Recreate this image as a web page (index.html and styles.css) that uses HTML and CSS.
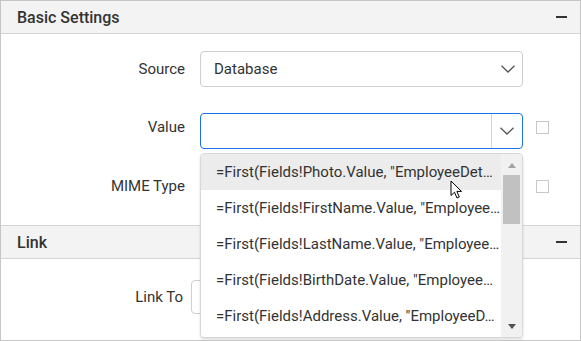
FILE: index.html
```html
<!DOCTYPE html>
<html>
<head>
<meta charset="utf-8">
<link rel="stylesheet" href="styles.css">
</head>
<body>
<div class="panel">
  <div class="sec-head">
    <span class="sec-title">Basic Settings</span>
    <span class="minus"></span>
  </div>
  <div class="sec-body basic">
    <div class="row row-source">
      <label class="lbl">Source</label>
      <div class="select">
        <span class="select-text">Database</span>
        <svg class="chev" width="14" height="8" viewBox="0 0 14 8"><path d="M0.5 0.7 L7 7 L13.5 0.7" fill="none" stroke="#555" stroke-width="1.3"/></svg>
      </div>
    </div>
    <div class="row row-value">
      <label class="lbl">Value</label>
      <div class="combo-wrap">
        <div class="combo">
          <span class="combo-input"></span>
          <span class="combo-btn">
            <svg class="chev" width="14" height="8" viewBox="0 0 14 8"><path d="M0.5 0.7 L7 7 L13.5 0.7" fill="none" stroke="#555" stroke-width="1.3"/></svg>
          </span>
        </div>
        <div class="popup">
          <ul class="list">
            <li class="item active">=First(Fields!Photo.Value, "EmployeeDet…</li>
            <li class="item">=First(Fields!FirstName.Value, "Employee…</li>
            <li class="item">=First(Fields!LastName.Value, "Employee…</li>
            <li class="item">=First(Fields!BirthDate.Value, "Employee…</li>
            <li class="item">=First(Fields!Address.Value, "EmployeeD…</li>
          </ul>
          <div class="scrollbar">
            <span class="arrow up"></span>
            <span class="thumb"></span>
            <span class="arrow down"></span>
          </div>
          <svg class="cursor" width="13" height="20" viewBox="0 0 13 20"><path d="M1 1 L1 15.5 L4.5 12.2 L7 18 L9.3 17 L6.9 11.4 L11.5 11.4 Z" fill="#fff" stroke="#000" stroke-width="1" stroke-linejoin="round"/></svg>
        </div>
      </div>
      <span class="check"></span>
    </div>
    <div class="row row-mime">
      <label class="lbl">MIME Type</label>
      <div class="select mime"></div>
      <span class="check"></span>
    </div>
  </div>
  <div class="sec-head link-head">
    <span class="sec-title">Link</span>
    <span class="minus"></span>
  </div>
  <div class="sec-body link">
    <div class="row row-link">
      <label class="lbl lbl-link">Link To</label>
      <div class="select linkto"></div>
    </div>
  </div>
</div>
</body>
</html>
```
FILE: styles.css
```css
* { box-sizing: border-box; }
html, body { margin: 0; padding: 0; background: #fff; }
body { font-family: Roboto, "Noto Sans", "Liberation Sans", sans-serif; color: #333; }

.panel {
  width: 581px;
  height: 341px;
  border: 1px solid #c6c6c6;
  overflow: hidden;
  position: relative;
  background: #fff;
}

.sec-head {
  height: 33px;
  background: #f3f3f3;
  border-bottom: 1px solid #d4d4d4;
  display: flex;
  align-items: center;
  justify-content: space-between;
  padding: 0 13px 0 16px;
}
.link-head { border-top: 1px solid #d4d4d4; height: 34px; }
.sec-title { font-size: 16px; font-weight: 500; color: #333; }
.minus { width: 11px; height: 1.5px; background: #333; }

.basic { height: 191px; padding-top: 17px; }
.link { padding-top: 21px; }

.row { display: flex; align-items: center; }
.lbl {
  width: 184px;
  text-align: right;
  font-size: 15px;
  color: #333;
  margin-right: 15px;
}

.select {
  width: 323px;
  height: 36px;
  border: 1px solid #cfcfcf;
  border-radius: 4px;
  display: flex;
  align-items: center;
  justify-content: space-between;
  padding: 0 7px 0 13px;
  font-size: 15px;
  color: #333;
}
.chev { display: block; }

.row-value { margin-top: 26px; align-items: flex-start; position: relative; z-index: 2; }
.row-value .lbl { margin-top: 5px; }
.combo-wrap { position: relative; width: 323px; }
.combo {
  height: 36px;
  border: 1px solid #1a73e8;
  border-radius: 4px;
  display: flex;
}
.combo-input { flex: 1; }
.combo-btn {
  width: 31px;
  border-left: 1px solid #d6d6d6;
  display: flex;
  align-items: center;
  justify-content: center;
}
.check {
  width: 13px;
  height: 13px;
  border: 1px solid #c8c8c8;
  margin-left: 13px;
}
.row-value .check { margin-top: 8px; }

.row-mime { margin-top: 19px; }

.popup {
  position: absolute;
  top: 40px;
  left: 0;
  width: 323px;
  height: 185px;
  background: #fff;
  border: 1px solid #d8d8d8;
  border-radius: 4px;
  box-shadow: 0 2px 3px rgba(0,0,0,0.12);
  display: flex;
  overflow: hidden;
}
.list { list-style: none; margin: 0; padding: 0; flex: 1; min-width: 0; }
.item {
  height: 36px;
  line-height: 36px;
  padding: 0 0 0 15px;
  font-size: 15px;
  color: #333;
  white-space: nowrap;
  overflow: hidden;
}
.item.active { background: #ececec; }
.scrollbar {
  width: 21px;
  background: #f1f1f1;
  position: relative;
  display: flex;
  flex-direction: column;
  align-items: center;
  padding: 0 2px;
}
.arrow { width: 0; height: 0; border-left: 4px solid transparent; border-right: 4px solid transparent; }
.arrow.up { border-bottom: 5px solid #a3a3a3; margin-top: 9px; }
.arrow.down { border-top: 5px solid #505050; margin-top: auto; margin-bottom: 8px; }
.thumb { width: 17px; height: 49px; background: #c1c1c1; margin-top: 7px; }

.cursor { position: absolute; left: 249px; top: 26px; }

.row-link .lbl-link { width: 182px; margin-right: 8px; }
.linkto { width: 320px; height: 34px; }
```
